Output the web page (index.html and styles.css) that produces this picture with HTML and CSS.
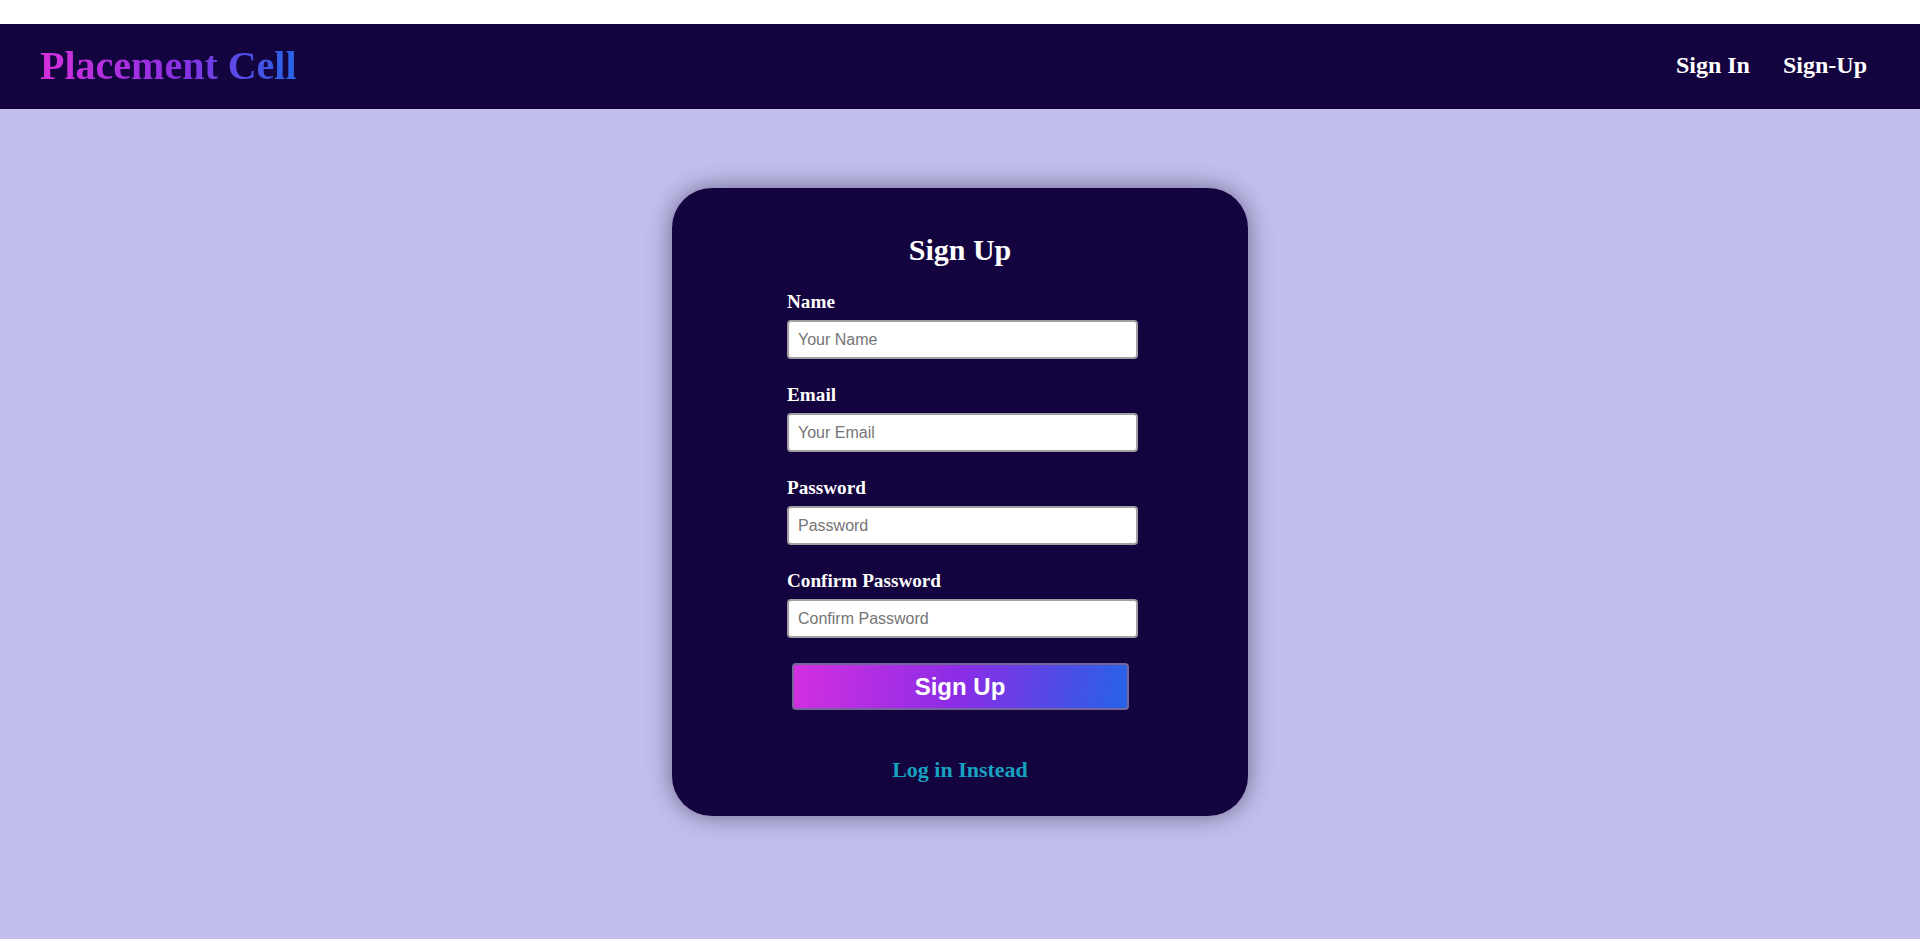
FILE: index.html
```html
<!DOCTYPE html>
<html lang="en">
<head>
<meta charset="utf-8">
<title>Placement Cell - Sign Up</title>
<link rel="stylesheet" href="styles.css">
</head>
<body>
<header class="topbar">
  <a class="logo" href="#">Placement Cell</a>
  <nav class="nav">
    <a href="#">Sign In</a>
    <a href="#">Sign-Up</a>
  </nav>
</header>
<main class="page">
  <section class="card">
    <h1 class="card-title">Sign Up</h1>
    <form class="form">
      <div class="field">
        <label for="name">Name</label>
        <input id="name" type="text" placeholder="Your Name">
      </div>
      <div class="field">
        <label for="email">Email</label>
        <input id="email" type="email" placeholder="Your Email">
      </div>
      <div class="field">
        <label for="pw">Password</label>
        <input id="pw" type="password" placeholder="Password">
      </div>
      <div class="field">
        <label for="cpw">Confirm Password</label>
        <input id="cpw" type="password" placeholder="Confirm Password">
      </div>
      <button class="submit" type="button">Sign Up</button>
    </form>
    <a class="alt-link" href="#">Log in Instead</a>
  </section>
</main>
</body>
</html>
```

FILE: styles.css
```css
* { box-sizing: border-box; }

html, body {
  margin: 0;
  padding: 0;
}

body {
  background: #ffffff;
  font-family: "Liberation Serif", "Times New Roman", serif;
  padding-top: 24px;
}

.topbar {
  height: 85px;
  background: #13033e;
  display: flex;
  align-items: center;
  justify-content: space-between;
  padding: 0 53px 0 40px;
}

.logo {
  font-size: 40px;
  font-weight: bold;
  line-height: 46px;
  margin-bottom: 2px;
  text-decoration: none;
  background: linear-gradient(to right, #d62fdc, #8a30e4 55%, #2466e6);
  -webkit-background-clip: text;
  background-clip: text;
  color: transparent;
}

.nav {
  display: flex;
  gap: 33px;
  padding-bottom: 4px;
}

.nav a {
  color: #ffffff;
  font-size: 24px;
  font-weight: bold;
  text-decoration: none;
  line-height: 28px;
}

.page {
  background: #c2bfed;
  min-height: calc(100vh - 109px);
  padding-top: 79px;
  display: flex;
  justify-content: center;
  align-items: flex-start;
}

.card {
  width: 576px;
  height: 628px;
  background: #13033e;
  border-radius: 40px;
  box-shadow: 0 0 24px rgba(40, 30, 60, 0.55);
  padding-top: 45px;
  display: flex;
  flex-direction: column;
  align-items: center;
}

.card-title {
  margin: 0;
  color: #ffffff;
  font-size: 30px;
  line-height: 34px;
  font-weight: bold;
}

.form {
  width: 346px;
  margin-top: 24px;
  display: flex;
  flex-direction: column;
}

.field {
  margin-bottom: 25px;
}

.field label {
  display: block;
  color: #ffffff;
  font-size: 19.2px;
  line-height: 22px;
  font-weight: bold;
  margin-bottom: 7px;
}

.field input {
  display: block;
  width: 351px;
  height: 39px;
  border: 2px solid #a0a0a4;
  border-radius: 4px;
  background: #ffffff;
  padding: 0 9px;
  font-family: "Liberation Sans", Arial, sans-serif;
  font-size: 16px;
  color: #222;
  outline: none;
}

.field input::placeholder {
  color: #757575;
}

.submit {
  align-self: center;
  width: 337px;
  height: 47px;
  border: 2px solid #75659a;
  border-radius: 4px;
  background: linear-gradient(100deg, #d42fe0 0%, #8a2de6 50%, #2563e6 100%);
  color: #ffffff;
  font-family: "Liberation Sans", Arial, sans-serif;
  font-size: 24px;
  font-weight: bold;
  cursor: pointer;
}

.alt-link {
  margin-top: 47px;
  color: #17a2c0;
  font-size: 22px;
  line-height: 26px;
  font-weight: bold;
  text-decoration: none;
}
```
